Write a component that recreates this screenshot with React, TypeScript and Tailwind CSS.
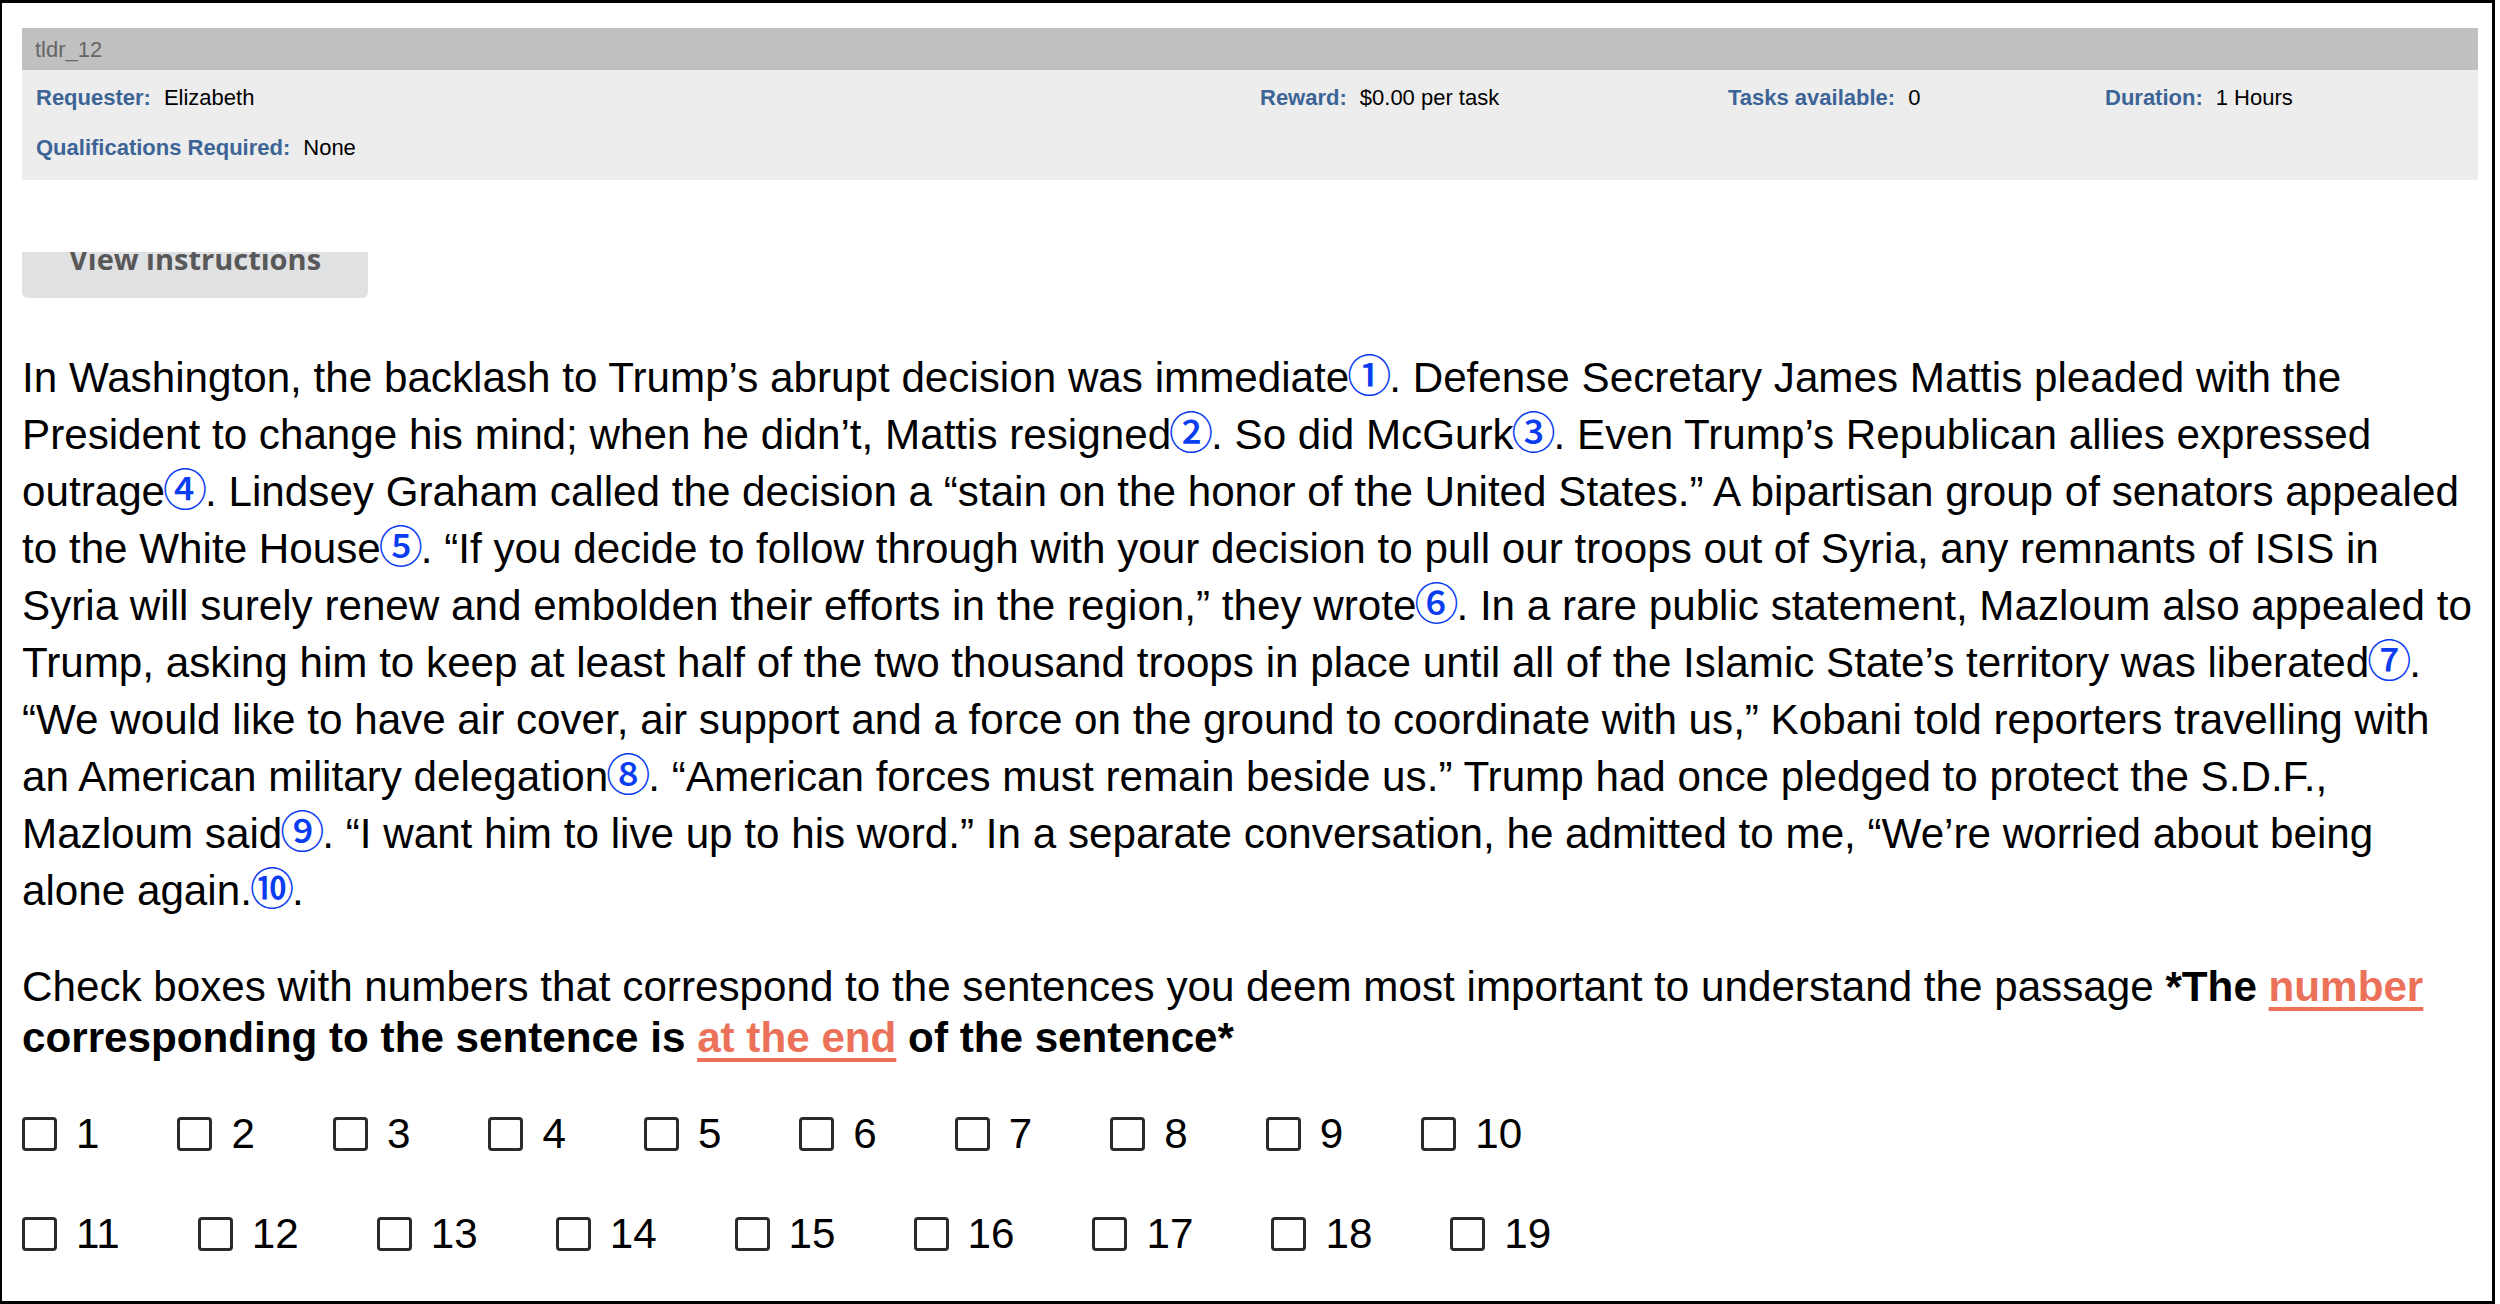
import React from 'react'

const Num = ({ c }: { c: string }) => (
  <span className="mx-[-2px] text-[#0a3cf0] text-[44px] leading-[0] font-medium font-['Noto_Sans_CJK_JP','DejaVu_Sans',sans-serif]">{c}</span>
)

const Meta = ({ label, value }: { label: string; value: string }) => (
  <div className="flex items-center h-[26px]">
    <span className="font-bold text-[#3c6496]">{label}</span>
    <span className="ml-[13px] text-black">{value}</span>
  </div>
)

const Check = ({ n }: { n: number }) => (
  <label className="flex items-center mr-[78px]">
    <span className="inline-block w-[35px] h-[34px] border-[3px] border-[#2a2a2a] rounded-[4px] bg-white" />
    <span className="ml-[19px]">{n}</span>
  </label>
)

export default function App() {
  const row1 = [1, 2, 3, 4, 5, 6, 7, 8, 9, 10]
  const row2 = [11, 12, 13, 14, 15, 16, 17, 18, 19]

  return (
    <div className="w-[2495px] h-[1304px] overflow-hidden border-t-[3px] border-l-2 border-r-[3px] border-b-[3px] border-black bg-white font-['Liberation_Sans',Arial,sans-serif] text-black pl-[20px] pr-[14px] pt-[25px]">
      {/* hit header */}
      <div className="h-[42px] bg-[#c0c0c0] flex items-center pl-[13px] text-[22px] text-[#666]">tldr_12</div>
      <div className="h-[110px] bg-[#ededed] pl-[14px] pt-[14px] text-[22px]">
        <div className="grid grid-cols-[1224px_468px_377px_1fr]">
          <Meta label="Requester:" value="Elizabeth" />
          <Meta label="Reward:" value="$0.00 per task" />
          <Meta label="Tasks available:" value="0" />
          <Meta label="Duration:" value="1 Hours" />
        </div>
        <div className="mt-[24px]">
          <Meta label="Qualifications Required:" value="None" />
        </div>
      </div>

      {/* instructions button, top scrolled out of view */}
      <div className="mt-[72px] w-[346px] h-[46px] overflow-hidden rounded-b-[6px] bg-[#e0e1e3] flex justify-center">
        <span className="mt-[-8px] h-[29px] leading-[29px] text-[29px] font-bold text-[#585858] font-['Open_Sans',sans-serif]">
          View instructions
        </span>
      </div>

      <p className="mt-[51px] text-[42.2px] leading-[57px] whitespace-nowrap">
        In Washington, the backlash to Trump’s abrupt decision was immediate<Num c="①" />. Defense Secretary James Mattis pleaded with the
        <br />
        President to change his mind; when he didn’t, Mattis resigned<Num c="②" />. So did McGurk<Num c="③" />. Even Trump’s Republican allies expressed
        <br />
        outrage<Num c="④" />. Lindsey Graham called the decision a “stain on the honor of the United States.” A bipartisan group of senators appealed
        <br />
        to the White House<Num c="⑤" />. “If you decide to follow through with your decision to pull our troops out of Syria, any remnants of ISIS in
        <br />
        Syria will surely renew and embolden their efforts in the region,” they wrote<Num c="⑥" />. In a rare public statement, Mazloum also appealed to
        <br />
        Trump, asking him to keep at least half of the two thousand troops in place until all of the Islamic State’s territory was liberated<Num c="⑦" />.
        <br />
        “We would like to have air cover, air support and a force on the ground to coordinate with us,” Kobani told reporters travelling with
        <br />
        an American military delegation<Num c="⑧" />. “American forces must remain beside us.” Trump had once pledged to protect the S.D.F.,
        <br />
        Mazloum said<Num c="⑨" />. “I want him to live up to his word.” In a separate conversation, he admitted to me, “We’re worried about being
        <br />
        alone again.<Num c="⑩" />.
      </p>

      <p className="mt-[42px] text-[42.2px] leading-[51px] whitespace-nowrap">
        Check boxes with numbers that correspond to the sentences you deem most important to understand the passage{' '}
        <b>
          *The <span className="text-[#ec7159] underline decoration-4 underline-offset-[6px]">number</span>
          <br />
          corresponding to the sentence is{' '}
          <span className="text-[#ec7159] underline decoration-4 underline-offset-[6px]">at the end</span> of the sentence*
        </b>
      </p>

      <div className="mt-[54px] flex text-[42.2px] leading-[34px]">
        {row1.map((n) => (
          <Check key={n} n={n} />
        ))}
      </div>
      <div className="mt-[66px] flex text-[42.2px] leading-[34px]">
        {row2.map((n) => (
          <Check key={n} n={n} />
        ))}
      </div>
    </div>
  )
}
